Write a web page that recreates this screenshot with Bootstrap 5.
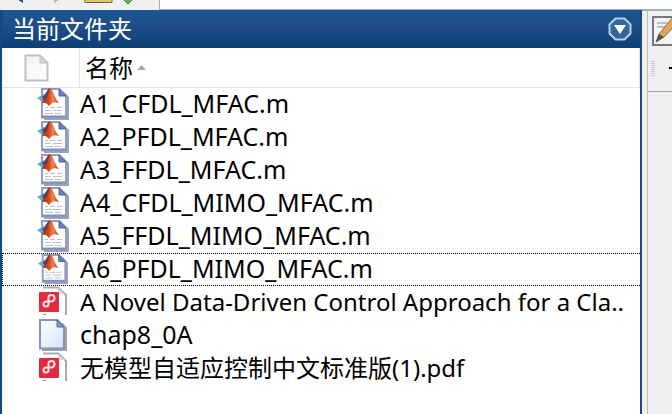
<!DOCTYPE html>
<html lang="zh-CN">
<head>
<meta charset="utf-8">
<meta name="viewport" content="width=device-width, initial-scale=1">
<title>当前文件夹</title>
<link rel="stylesheet" href="https://cdn.jsdelivr.net/npm/bootstrap@5.3.0/dist/css/bootstrap.min.css">
<style>
body{font-family:"Noto Sans","Noto Sans CJK SC",sans-serif;font-size:24px;line-height:32px;color:#000;background:#efefef}
svg{display:block}
.tool-strip{height:10px;background:#f0f0f0}
.tool-strip button{height:10px}
.nav-tools{width:159px}
.path-box{height:10px;border-left:1px solid #aaa;border-bottom:1px solid #a5afba;background:#fff;outline:0}
.file-panel{border-left:2px solid #0f4a84;border-right:2px solid #1b497f;min-width:0}
.panel-title{height:38px;padding:0 8px 0 10px;color:#fff;background:linear-gradient(#1a5692,#204f89 35%,#0d3f76)}
.panel-title h1{font-size:24px;line-height:38px}
.file-table{table-layout:fixed;border-collapse:separate;border-spacing:0}
.file-table .type-col{width:78px}
.file-table thead th{height:40px;border-bottom:1px solid #e4e4e4;font-weight:400}
.file-table thead th:first-child{border-right:1px solid #e4e4e4;padding-left:22px}
.file-table thead th:last-child{border-right:1px solid #e4e4e4}
.sort-btn{padding-left:5px;gap:4px}
.file-table tbody td{height:33px;white-space:nowrap}
.file-table tbody td:first-child{padding-left:35px}
.file-table tbody td:last-child{font-size:25px;line-height:31px;padding:0 0 2px}
.file-table tbody td.long-name{font-size:24px}
.file-table tbody .focused td{border-top:1px dotted #000;border-bottom:1px dotted #000}
.file-table tbody .focused td:first-child{border-left:1px dotted #000;padding-left:34px}
.file-table tbody .focused td:last-child{line-height:29px}
.focused svg{height:31px}
.side-dock{width:30px;background:linear-gradient(90deg,#f0f0f0 5px,#bdbdbd 5px,#bdbdbd 6px,#efefef 6px);border-top:1px solid #a5afba;overflow:hidden}
.dock-row{height:37px;padding:5px 0 0 10px}
.dock-tools{height:44px;margin-left:6px;border-bottom:1px solid #a5a5a5;padding-left:3px}
</style>
<script src="https://cdn.jsdelivr.net/npm/bootstrap@5.3.0/dist/js/bootstrap.bundle.min.js"></script>
</head>
<body>
<svg width="0" height="0" class="position-absolute" aria-hidden="true">
  <defs>
    <linearGradient id="paper" x1="0" y1="0" x2="1" y2="1"><stop offset="0" stop-color="#fff"/><stop offset="1" stop-color="#d3e3fa"/></linearGradient>
    <linearGradient id="peak" x1="0" x2="1"><stop offset="0" stop-color="#9c3426"/><stop offset=".4" stop-color="#d4491f"/><stop offset=".65" stop-color="#f0874a"/><stop offset="1" stop-color="#b93a1a"/></linearGradient>
    <linearGradient id="greypaper" x1="0" y1="0" x2="1" y2="1"><stop offset="0" stop-color="#f4f4f4"/><stop offset="1" stop-color="#fdfdfd"/></linearGradient>
  </defs>
  <symbol id="mfile" viewBox="0 0 33 33">
    <path d="M7 4H27l5 5V32H7Z" fill="#a2a2a7"/>
    <path d="M5 1H22.500L29 8V29.500H5Z" fill="#fdfdff" stroke="#8f9dca" stroke-width="2"/>
    <path d="M5 28.500H29" stroke="#7d90bb" stroke-width="2"/>
    <path d="M22 1V8H29Z" fill="#6f80b5" stroke="#56649d"/>
    <path d="M8 19.500h3m2 0h5m2 0h5M8 22.500h6m2 0h9M8 25.500h8m2 0h6" stroke="#bcbfc4" stroke-width="1"/>
    <path d="M0 10L7 6 11 9 7 15 4 13Z" fill="#5babd2"/>
    <path d="M5 9C9 8 10 1 13.500 0C17 3 17 10 22 15C18 14 16 13 12 18C10 16 9 14 5 15L7 10Z" fill="url(#peak)"/>
    <path d="M5 9C9 7 10 1 13 0L10 10 7 12Z" fill="#654052"/>
  </symbol>
  <symbol id="plainfile" viewBox="0 0 33 33">
    <path d="M5 4H26l4 5V32H5Z" fill="#a3a3a3"/>
    <path d="M3 1H20.500L27 8V29.500H3Z" fill="url(#paper)" stroke="#8494c2" stroke-width="2"/>
    <path d="M20 1V8H27Z" fill="#8796c6" stroke="#56649d"/>
  </symbol>
  <symbol id="pdffile" viewBox="0 0 33 33">
    <path d="M6 1.500H21L29 9V29" fill="none" stroke="#aaa" stroke-width="2"/>
    <path d="M21 2V8H28Z" fill="#d8d8d8"/>
    <path d="M6 28.500h3" stroke="#999"/>
    <rect x="2" y="6" width="20" height="20" rx="1" fill="#e32b40"/>
    <path d="M11.500 19.500V11.500q0-2.500 3-2.500t3 3-3 3.500H9.500q-3 0-3 2.500t2.500 2.500 2.500-2.500" fill="none" stroke="#ffdfe1" stroke-width="2"/>
  </symbol>
</svg>

<div class="d-flex flex-column min-vh-100">
  <header class="tool-strip d-flex">
    <div class="nav-tools d-flex flex-shrink-0">
      <button type="button" class="btn d-block p-0 border-0 rounded-0" aria-label="后退"><svg width="42" height="10"><path d="M12-4L23-12V3Z" fill="#1f4f86"/></svg></button>
      <button type="button" class="btn d-block p-0 border-0 rounded-0" aria-label="前进"><svg width="38" height="10"><path d="M12-12V3L23-4Z" fill="#b5b5b9"/></svg></button>
      <button type="button" class="btn d-block p-0 border-0 rounded-0" aria-label="文件夹"><svg width="38" height="10"><path d="M4-5H32V2.500H5Z" fill="#dcc579" stroke="#806329" stroke-width="1"/></svg></button>
      <button type="button" class="btn d-block p-0 border-0 rounded-0" aria-label="向下"><svg width="20" height="10"><path d="M4-2H16L10 4Z" fill="#6db365" stroke="#37793b"/></svg></button>
    </div>
    <input type="text" class="path-box flex-grow-1 border-top-0 border-end-0 p-0" aria-label="路径">
  </header>
  <div class="d-flex flex-grow-1">
    <main class="file-panel flex-grow-1 bg-white">
      <div class="panel-title d-flex align-items-center justify-content-between">
        <h1 class="m-0 fw-normal">当前文件夹</h1>
        <button type="button" class="btn d-block p-0 border-0" aria-label="面板菜单"><svg width="24" height="24" viewBox="0 0 24 24"><path d="M7.500 1.500h9l6 6v9l-6 6h-9l-6-6v-9Z" fill="#34669c" stroke="#b4cfe9" stroke-width="2"/><path d="M6 8H18L12 17Z" fill="#fff"/></svg></button>
      </div>
      <table class="file-table w-100">
        <colgroup><col class="type-col"><col></colgroup>
        <thead><tr>
          <th scope="col" class="py-0 pe-0" aria-label="类型"><svg width="25" height="28" viewBox="0 0 25 28"><path d="M1.500 1.500H16L23.500 9V26.500H1.500Z" fill="url(#greypaper)" stroke="#c1c1c1" stroke-width="2"/><path d="M16 2V9H23Z" fill="#d5d5d5" stroke="#bdbdbd"/></svg></th>
          <th scope="col" class="p-0" aria-sort="ascending"><button type="button" class="sort-btn d-flex align-items-center bg-transparent border-0 py-0 pe-0">名称<svg width="9" height="5"><path d="M0 5L4.500 0 9 5Z" fill="#aaa"/></svg></button></th>
        </tr></thead>
        <tbody>
          <tr><td class="py-0 pe-0"><svg width="33" height="33"><use href="#mfile"/></svg></td><td>A1_CFDL_MFAC.m</td></tr>
          <tr><td class="py-0 pe-0"><svg width="33" height="33"><use href="#mfile"/></svg></td><td>A2_PFDL_MFAC.m</td></tr>
          <tr><td class="py-0 pe-0"><svg width="33" height="33"><use href="#mfile"/></svg></td><td>A3_FFDL_MFAC.m</td></tr>
          <tr><td class="py-0 pe-0"><svg width="33" height="33"><use href="#mfile"/></svg></td><td>A4_CFDL_MIMO_MFAC.m</td></tr>
          <tr><td class="py-0 pe-0"><svg width="33" height="33"><use href="#mfile"/></svg></td><td>A5_FFDL_MIMO_MFAC.m</td></tr>
          <tr class="focused"><td class="py-0 pe-0"><svg width="33" height="33"><use href="#mfile"/></svg></td><td>A6_PFDL_MIMO_MFAC.m</td></tr>
          <tr><td class="py-0 pe-0"><svg width="33" height="33"><use href="#pdffile"/></svg></td><td class="long-name">A Novel Data-Driven Control Approach for a Cla..</td></tr>
          <tr><td class="py-0 pe-0"><svg width="33" height="33"><use href="#plainfile"/></svg></td><td>chap8_0A</td></tr>
          <tr><td class="py-0 pe-0"><svg width="33" height="33"><use href="#pdffile"/></svg></td><td class="long-name">无模型自适应控制中文标准版(1).pdf</td></tr>
        </tbody>
      </table>
    </main>
    <aside class="side-dock flex-shrink-0">
      <div class="dock-row"><button type="button" class="btn d-block p-0 border-0" aria-label="编辑器"><svg width="30" height="30" viewBox="0 0 30 30"><rect x="1" y="1" width="34" height="28" fill="#eef4f7" stroke="#777" stroke-width="2"/><path d="M5 7H18M5 11H14" stroke="#b5c2cc" stroke-width="2"/><path d="M4 26L7 18 22 0 28 4 12 21Z" fill="#dfa75d" stroke="#8f6431"/><path d="M4 26L7 18 12 21Z" fill="#555"/></svg></button></div>
      <div class="dock-tools d-flex"><svg width="24" height="43"><path d="M1 13V29M3 13V29" stroke="#aaa" stroke-width="1" stroke-dasharray="1 1"/><path d="M18 20H24" stroke="#000" stroke-width="2"/></svg></div>
    </aside>
  </div>
</div>
</body>
</html>
